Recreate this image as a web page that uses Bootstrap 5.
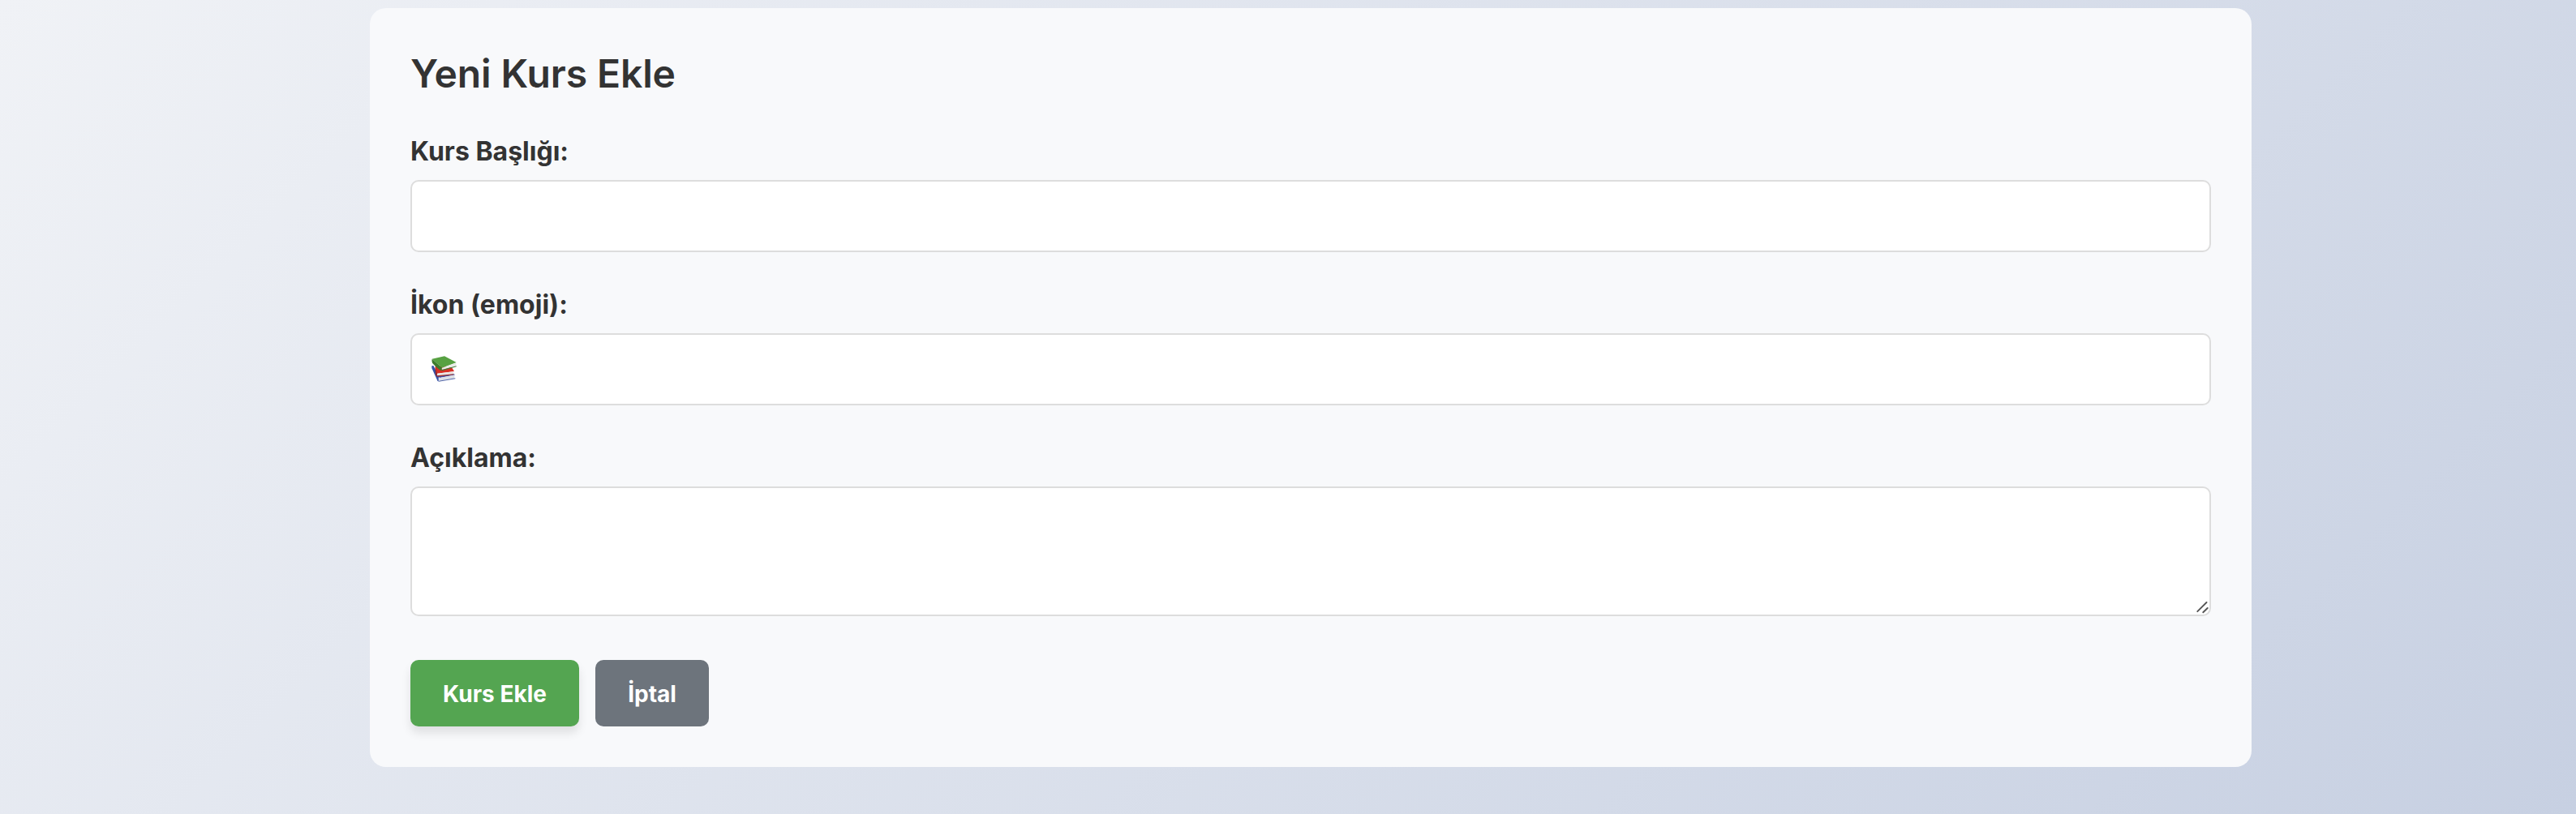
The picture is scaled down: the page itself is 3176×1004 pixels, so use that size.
<!DOCTYPE html>
<html lang="tr">
<head>
<meta charset="utf-8">
<meta name="viewport" content="width=device-width, initial-scale=1">
<title>Yeni Kurs Ekle</title>
<link href="https://cdn.jsdelivr.net/npm/bootstrap@5.3.0/dist/css/bootstrap.min.css" rel="stylesheet">
<style>
body{font-family:Inter,"Liberation Sans",sans-serif;color:#333;height:1004px;overflow:hidden;background:linear-gradient(135deg,#f0f2f6 0%,#c7d0e2 100%);}
.course-panel{width:2320px;height:936px;margin:10px 0 0 456px;padding:50px;border-radius:20px;background:#f8f9fb;}
.panel-title{font-size:48px;line-height:61px;font-weight:600;letter-spacing:-.1px;margin-bottom:46px;}
.field{margin-bottom:45px;}
.field-last{margin-bottom:54px;}
.form-label{display:block;font-size:32px;line-height:39px;font-weight:700;margin-bottom:16px;}
.form-control{border:2px solid #ddd;border-radius:10px;height:89px;padding:0 24px;font-size:32px;background:#fff;}
textarea.form-control{height:160px;padding:24px;resize:none;display:block;}
.books{width:32px;height:32px;margin-top:-1px;}
.grip{right:3px;bottom:3px;width:15px;height:15px;}
.btn{font-size:28px;line-height:34px;font-weight:700;padding:25px 0 23px;border:0;border-radius:10px;color:#fff;}
.btn-add{width:208px;background:#54a551;box-shadow:0 8px 12px rgba(0,0,0,.1);}
.btn-cancel{width:140px;background:#6d747c;}
</style>
<script src="https://cdn.jsdelivr.net/npm/bootstrap@5.3.0/dist/js/bootstrap.bundle.min.js"></script>
</head>
<body class="d-flex align-items-start">
<form class="course-panel flex-shrink-0">
  <h2 class="panel-title"><span>Yeni Kurs Ekle</span></h2>
  <div class="field">
    <label class="form-label" for="title"><span>Kurs Başlığı:</span></label>
    <input id="title" type="text" class="form-control">
  </div>
  <div class="field">
    <div class="form-label"><span>İkon (emoji):</span></div>
    <div class="form-control d-flex align-items-center">
      <svg class="books" viewBox="125 296 96 96" role="img" aria-label="Kitaplar">
        <path d="M126 333l6-1 20 38-1 21q-5-1-6-8l-19-42z" fill="#3450a5"/>
        <path d="M146 370l60-9 6 5-56 11z" fill="#4054ae"/>
        <path d="M151 378l60-11-2 12-54 10q-5-4-4-11z" fill="#dcdfe5"/>
        <path d="M152 388l61-10v3l-61 10z" fill="#5367a9"/>
        <path d="M139 332l61 7 9 14-63 8q-8-13-7-29z" fill="#d82f25"/>
        <path d="M138 335l8 25-1 11q-4-1-5-7z" fill="#9d2824"/>
        <path d="M146 361l60-7 1 10-61 6z" fill="#e8e4e2"/>
        <path d="M145 369l62-6v3l-62 7z" fill="#9c302c"/>
        <path d="M127 307l46-10 44 23-53 20z" fill="#57a142"/>
        <path d="M127 307l37 33-2 11q-11-4-34-29-3-7-1-15z" fill="#3c7b2c"/>
        <path d="M164 340l52-18 0 11-50 14q-5-2-2-7z" fill="#e9ebe8"/>
        <path d="M162 348l55-15v3l-52 15z" fill="#417936"/>
      </svg>
    </div>
  </div>
  <div class="field-last position-relative">
    <label class="form-label" for="desc"><span>Açıklama:</span></label>
    <textarea id="desc" class="form-control"></textarea>
    <svg class="grip position-absolute" viewBox="0 0 15 15" fill="none" stroke="#555" stroke-width="1.9" stroke-linecap="round"><path d="M1.3 12.2L12.5 1M8.3 13.3L13.7 8"/></svg>
  </div>
  <div class="d-flex" style="gap:20px">
    <button type="button" class="btn btn-add">Kurs Ekle</button>
    <button type="button" class="btn btn-cancel">İptal</button>
  </div>
</form>
</body>
</html>
